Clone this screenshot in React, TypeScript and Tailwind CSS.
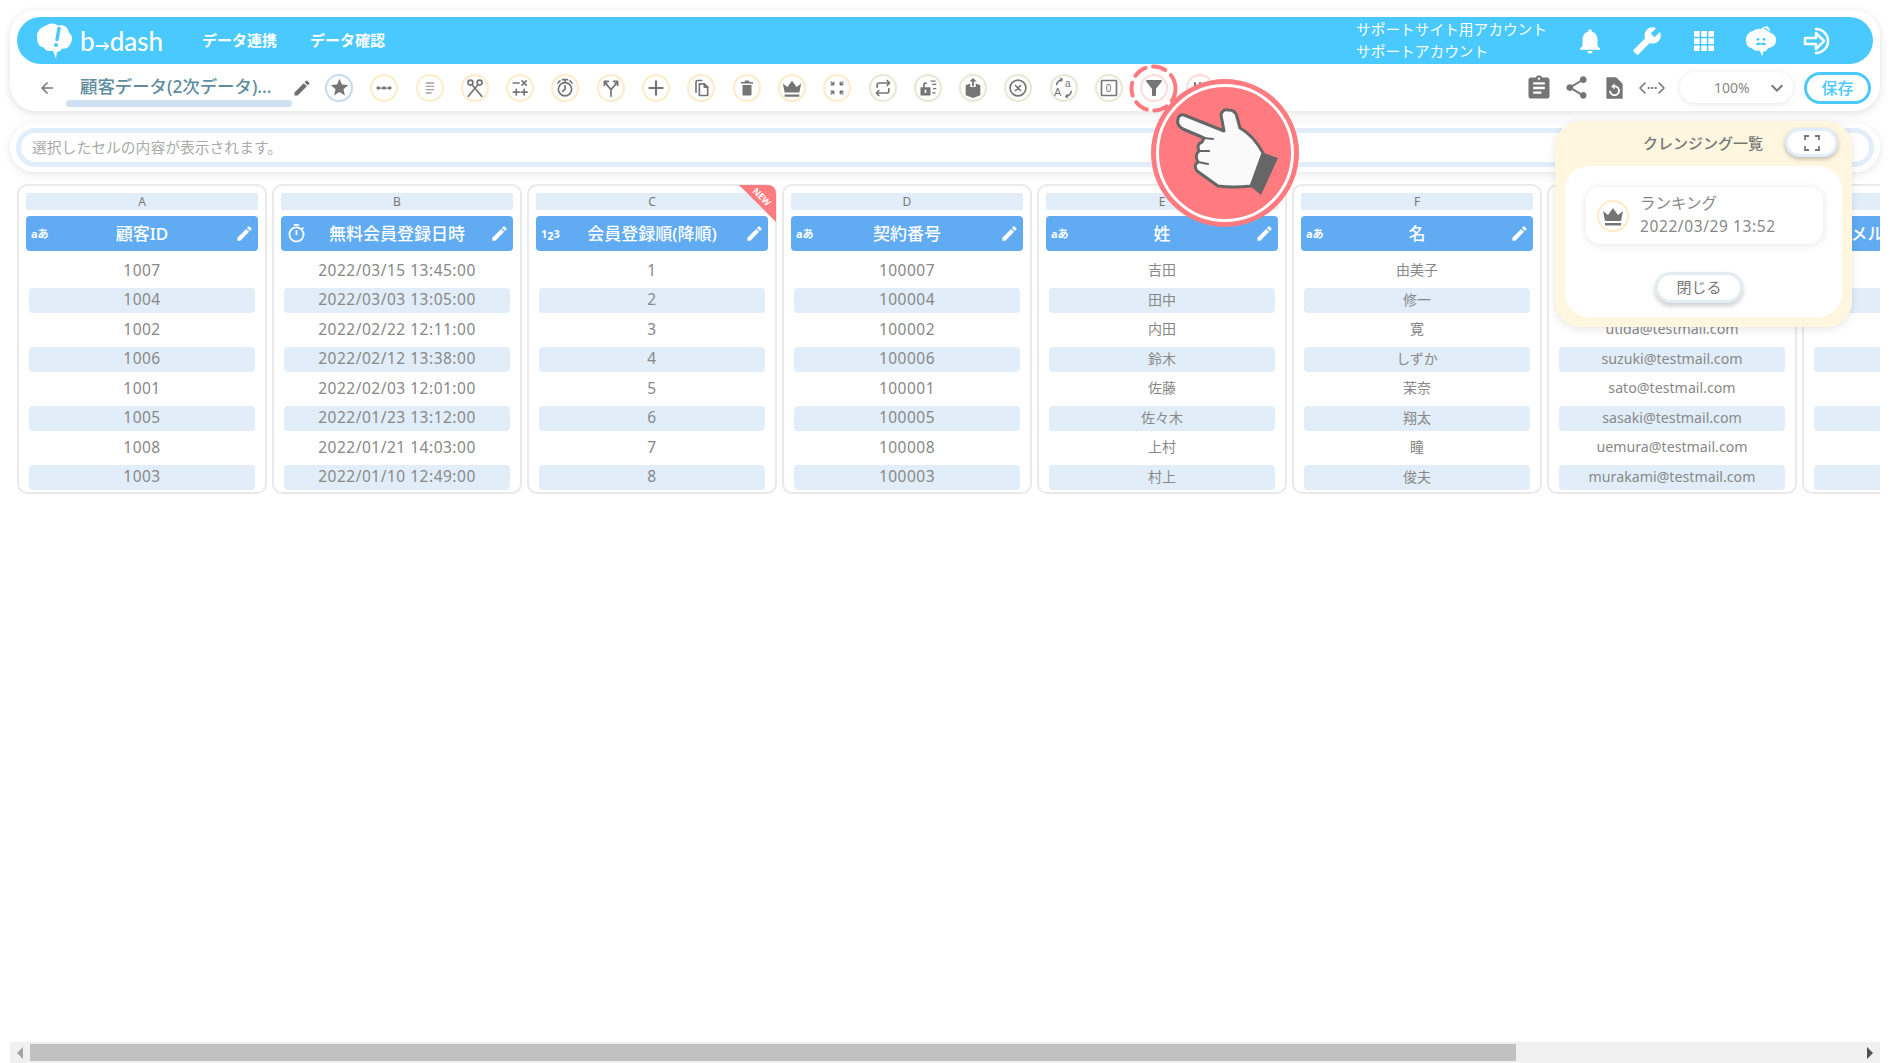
import { ReactNode } from "react";
import { MdArrowBack, MdEdit, MdNotifications, MdBuild, MdAssignment, MdShare, MdStar, MdKeyboardArrowDown, MdFilterAlt, MdOutlineTimer } from "react-icons/md";

const ic = "#757575";

function Ico({ children }: { children: ReactNode }) {
  return (
    <svg width="20" height="20" viewBox="0 0 24 24" fill="none" stroke={ic} strokeWidth="2" strokeLinecap="round" strokeLinejoin="round">
      {children}
    </svg>
  );
}

const tools: { border: string; icon: ReactNode }[] = [
  { border: "border-[#c5dcf0]", icon: <MdStar size={21} color={ic} /> },
  { border: "border-[#fcecc8]", icon: <Ico><path d="M4 12h16" strokeWidth="1.5" /><circle cx="5" cy="12" r="2" fill={ic} stroke="none" /><circle cx="12" cy="12" r="2" fill={ic} stroke="none" /><circle cx="19" cy="12" r="2" fill={ic} stroke="none" /></Ico> },
  { border: "border-[#fcecc8]", icon: <Ico><path d="M7 6h10M7 10h10M7 14h10M7 18h7" stroke="#a0a0a0" strokeWidth="1.6" strokeLinecap="butt" /></Ico> },
  { border: "border-[#fcecc8]", icon: <Ico><circle cx="6.5" cy="5.5" r="3" /><circle cx="17.5" cy="5.5" r="3" /><path d="M8.5 8 20 22M15.5 8 4 22" /></Ico> },
  { border: "border-[#fcecc8]", icon: <Ico><path d="M4 6h7M14.5 3.5l5 5M19.5 3.5l-5 5M4 17h7M7.5 13.5v7M13.5 17h7M17 13.5v7" /></Ico> },
  { border: "border-[#fcecc8]", icon: <Ico><circle cx="12" cy="13.5" r="8" /><path d="M9 2h6M12 2v3M12 13.5V9M12 13.5l-3 2.5M3.5 6 6 3.5M20.5 6 18 3.5" /></Ico> },
  { border: "border-[#fcecc8]", icon: <Ico><path d="M12 22v-8l6-7M12 14 6 7M4 9V4h5M20 9V4h-5M4 4l3 3M20 4l-3 3" /></Ico> },
  { border: "border-[#fcecc8]", icon: <Ico><path d="M12 4v16M4 12h16" strokeWidth="2.6" /></Ico> },
  { border: "border-[#fcecc8]", icon: <Ico><path d="M6 17V5a2 2 0 0 1 2-2h5" /><path d="M10 7h6l4 4v10H10z" /><path d="M16 7v4h4" /></Ico> },
  { border: "border-[#fcecc8]", icon: <svg width="18" height="18" viewBox="0 0 24 24" fill={ic}><path d="M9 2h6v2h5v2H4V4h5zM6 8h12v13a1 1 0 0 1-1 1H7a1 1 0 0 1-1-1z" /></svg> },
  { border: "border-[#fcecc8]", icon: <svg width="22" height="22" viewBox="0 0 24 24" fill={ic}><path d="M2 7l5 4 5-7 5 7 5-4-2 10H4zM4 19h16v2.500H4z" /></svg> },
  { border: "border-[#fcecc8]", icon: <Ico><path d="M5 5l3 3M8 5v3H5M19 5l-3 3M16 5v3h3M5 19l3-3M8 19v-3H5M19 19l-3-3M16 19v-3h3" strokeWidth="1.8" /></Ico> },
  { border: "border-[#e4ead4]", icon: <Ico><path d="M5 11V8a2 2 0 0 1 2-2h13M17 3l3 3-3 3M19 13v3a2 2 0 0 1-2 2H4M7 15l-3 3 3 3" /></Ico> },
  { border: "border-[#e4ead4]", icon: <svg width="20" height="20" viewBox="0 0 24 24" fill={ic}><path d="M3 11h12v10H3zM6 11V8a3 3 0 0 1 5-2l-1 1.500A1.500 1.500 0 0 0 8 8v3z" /><rect x="8" y="14" width="2" height="4" fill="#fff" /><path d="M15 3h6v1.500h-6zM17 7h5v1.500h-5zM18 12h4v1.500h-4zM17 17h4v1.500h-4z" /></svg> },
  { border: "border-[#e4ead4]", icon: <svg width="22" height="22" viewBox="0 0 24 24" fill={ic}><path d="M12 1l4 4h-3v5h-2V5H8zM4 9l5-2v4h6V7l5 2v11l-8 3-8-3z" /></svg> },
  { border: "border-[#e4ead4]", icon: <Ico><circle cx="12" cy="12" r="9.500" /><path d="M9 9l6 6M15 9l-6 6" /></Ico> },
  { border: "border-[#e4ead4]", icon: <svg width="22" height="22" viewBox="0 0 24 24" fill="none" stroke={ic} strokeWidth="1.600"><path d="M4 9a6 6 0 0 1 6-6M8 1l2 2-2 2M20 15a6 6 0 0 1-6 6M16 23l-2-2 2-2" /><text x="13" y="11" fontSize="11" fill={ic} stroke="none" fontFamily="Liberation Sans">a</text><text x="1" y="21" fontSize="12" fill={ic} stroke="none" fontFamily="Liberation Sans">A</text></svg> },
  { border: "border-[#e4ead4]", icon: <svg width="20" height="20" viewBox="0 0 24 24" fill="none" stroke={ic} strokeWidth="2"><rect x="3" y="3" width="18" height="18" rx="1" /><text x="8" y="17" fontSize="12" fill={ic} stroke="none" fontFamily="Liberation Sans">0</text></svg> },
  { border: "border-[#fcdcdc]", icon: <MdFilterAlt size={24} color={ic} /> },
  { border: "border-[#fcdcdc]", icon: <Ico><path d="M6 6v4M12 6v4M18 6v4" strokeWidth="2.500" /></Ico> },
];

type Col = { letter: string; title: string; type: "text" | "time" | "num"; size: string; rows: string[]; isNew?: boolean };

const digits = "text-[15.500px] tracking-[0.5px]";
const kana = "text-[14px] pb-[2px]";

const cols: Col[] = [
  { letter: "A", title: "顧客ID", type: "text", size: digits, rows: ["1007", "1004", "1002", "1006", "1001", "1005", "1008", "1003"] },
  { letter: "B", title: "無料会員登録日時", type: "time", size: digits, rows: ["2022/03/15 13:45:00", "2022/03/03 13:05:00", "2022/02/22 12:11:00", "2022/02/12 13:38:00", "2022/02/03 12:01:00", "2022/01/23 13:12:00", "2022/01/21 14:03:00", "2022/01/10 12:49:00"] },
  { letter: "C", title: "会員登録順(降順)", type: "num", size: digits, isNew: true, rows: ["1", "2", "3", "4", "5", "6", "7", "8"] },
  { letter: "D", title: "契約番号", type: "text", size: digits, rows: ["100007", "100004", "100002", "100006", "100001", "100005", "100008", "100003"] },
  { letter: "E", title: "姓", type: "text", size: kana, rows: ["吉田", "田中", "内田", "鈴木", "佐藤", "佐々木", "上村", "村上"] },
  { letter: "F", title: "名", type: "text", size: kana, rows: ["由美子", "修一", "寛", "しずか", "茉奈", "翔太", "瞳", "俊夫"] },
  { letter: "G", title: "メールアドレス", type: "text", size: "text-[14.200px] pb-[1px]", rows: ["", "", "utida@testmail.com", "suzuki@testmail.com", "sato@testmail.com", "sasaki@testmail.com", "uemura@testmail.com", "murakami@testmail.com"] },
  { letter: "H", title: "メルマガ購読フラグ", type: "text", size: digits, rows: ["", "", "", "", "", "", "", ""] },
];

function Cloud({ size }: { size: number }) {
  return (
    <svg width={size} height={size} viewBox="0 0 37 36">
      <path d="M10 3Q16-1 22 3 31 1 33 10 38 14 35 20 33 27 26 26 24 30 21 29L20 36 17 28Q10 30 8 25 1 24 1 15 0 7 10 3Z" fill="#fff" />
      <path d="M23 6 21 17" stroke="#4ac9ff" strokeWidth="3.500" strokeLinecap="round" />
      <circle cx="20" cy="22.500" r="2" fill="#4ac9ff" />
    </svg>
  );
}

function Column({ col }: { col: Col }) {
  return (
    <div className="relative w-[250px] h-[310px] shrink-0 border-2 border-[#e9e9e9] rounded-[10px] pl-[7px] pr-[7px] pt-[7px] bg-white">
      {col.isNew && (
        <div className="absolute -top-[1px] -right-[1px] w-[37px] h-[37px] bg-[#ff7b80] rounded-tr-[8px] [clip-path:polygon(0_0,100%_0,100%_100%)]">
          <span className="absolute top-[6px] left-[12px] rotate-45 text-[9px] leading-[12px] font-bold text-white">NEW</span>
        </div>
      )}
      <div className="h-[17px] bg-[#e1eefa] rounded-[2px] flex items-center justify-center text-[12px] text-[#777]">{col.letter}</div>
      <div className="mt-[6px] h-[35px] bg-[#60abf2] rounded-[4px] grid grid-cols-[36px_1fr_36px] items-center text-white">
        <div className="pl-[5px] flex items-center">
          {col.type === "text" && <span className="text-[11px] font-bold leading-none">aあ</span>}
          {col.type === "num" && (
            <span className="text-[11px] font-bold leading-none">1<span className="relative top-[2px]">2</span>3</span>
          )}
          {col.type === "time" && <MdOutlineTimer size={21} color="#fff" />}
        </div>
        <div className="text-center text-[17px] font-medium whitespace-nowrap">{col.title}</div>
        <div className="flex justify-end pr-[4px]"><MdEdit size={19} color="#fff" /></div>
      </div>
      <div className="mt-[7px] flex flex-col gap-[4.5px]">
        {col.rows.map((r, i) => (
          <div key={i} className={`mx-[3px] h-[25px] rounded-[4px] flex items-center justify-center text-[#888] ${col.size} ${i % 2 === 1 ? "bg-[#e1eefa]" : ""}`}>
            {r}
          </div>
        ))}
      </div>
    </div>
  );
}

export default function App() {
  return (
    <div className="relative w-[1890px] h-[1063px] flex flex-col overflow-hidden bg-white font-['Noto_Sans','Noto_Sans_CJK_JP',sans-serif]">
      {/* header card */}
      <div className="mt-[10px] mx-[10px] h-[101px] rounded-[26px] bg-white shadow-[0_2px_8px_rgba(0,0,0,0.12)] shrink-0 px-[7px] pt-[7px]">
        <div className="h-[47px] rounded-full bg-[#4ac9ff] flex items-center pl-[19px] pr-[40px] text-white">
          <Cloud size={37} />
          <span className="ml-[7px] w-[82px] text-[26px] leading-none font-medium font-['Lato',sans-serif] whitespace-nowrap">b<span className="text-[15px] font-bold">→</span>dash</span>
          <span className="ml-[40px] text-[15px] font-bold">データ連携</span>
          <span className="ml-[33px] text-[15px] font-bold">データ確認</span>
          <div className="ml-auto w-[191px] -mt-[1px] text-[14.700px] leading-[22px] whitespace-nowrap">
            <div>サポートサイト用アカウント</div>
            <div>サポートアカウント</div>
          </div>
          <div className="ml-[28px] flex items-center gap-[27px]">
            <MdNotifications size={30} color="#fff" />
            <MdBuild size={30} color="#fff" className="-scale-x-100" />
            <svg width="30" height="30" viewBox="0 0 24 24" fill="#fff">
              <path d="M4 4h4.500v4.500H4zM9.800 4h4.500v4.500H9.800zM15.500 4H20v4.500h-4.500zM4 9.800h4.500v4.500H4zM9.800 9.800h4.500v4.500H9.800zM15.500 9.800H20v4.500h-4.500zM4 15.500h4.500V20H4zM9.800 15.500h4.500V20H9.800zM15.500 15.500H20V20h-4.500z" />
            </svg>
            <svg width="32" height="32" viewBox="0 0 37 36" className="-mx-[1px]">
              <path d="M10 6Q14 3 19 4 21 1 26 1L29 5 28 8Q36 10 36 18 35 25 27 26 24 31 21 30L20 36 17 29Q10 30 8 26 1 25 1 17 1 9 10 6Z" fill="#fff" />
              <path d="M22 3Q26 5 28 7" stroke="#4ac9ff" strokeWidth="1.200" fill="none" />
              <circle cx="15" cy="16" r="1.600" fill="#4ac9ff" />
              <circle cx="22" cy="16" r="1.600" fill="#4ac9ff" />
              <path d="M12 22Q16 18 18.500 21 21 18 25 22 21 23.500 18.500 22 16 23.500 12 22Z" fill="#4ac9ff" />
            </svg>
            <svg width="30" height="30" viewBox="0 0 30 30" fill="none" stroke="#fff" strokeWidth="2.500" strokeLinejoin="round" strokeLinecap="round">
              <path d="M2 12h11V7l8 8-8 8v-5H2z" />
              <path d="M13 3a12 12 0 1 1 0 24" />
            </svg>
          </div>
        </div>
        <div className="h-[47px] flex items-center">
          <MdArrowBack size={18} color="#777" className="ml-[21px]" />
          <div className="ml-[10px] w-[226px] h-[38px] relative shrink-0">
            <span className="absolute left-[14px] top-[6px] text-[17.400px] leading-[22px] font-medium text-[#5e8c9c] whitespace-nowrap">顧客データ(2次データ)...</span>
            <div className="absolute left-0 right-0 bottom-0 h-[7px] rounded-full bg-[#cfe0f0]" />
          </div>
          <MdEdit size={20} color="#6e6e6e" />
          <div className="ml-[13px] flex items-center gap-[17.300px]">
            {tools.map((t, i) => (
              <div key={i} className={`w-[28px] h-[28px] rounded-full border-2 ${t.border} bg-white flex items-center justify-center shrink-0`}>
                {t.icon}
              </div>
            ))}
          </div>
          <div className="ml-auto flex items-center">
            <MdAssignment size={28} color={ic} />
            <MdShare size={27} color={ic} className="ml-[10px]" />
            <svg width="26" height="26" viewBox="0 0 24 24" fill={ic} className="ml-[11px]">
              <path d="M5 2h9l6 6v14H5zM12.500 9.500a5 5 0 1 1-5 5h1.800a3.200 3.200 0 1 0 3.200-3.200v2L9.500 10.500l3-3z" fillRule="evenodd" />
            </svg>
            <svg width="28" height="20" viewBox="0 0 28 20" fill="none" stroke={ic} strokeWidth="1.600" className="ml-[11px]" strokeLinecap="round" strokeLinejoin="round">
              <path d="M7 5 2 10l5 5M21 5l5 5-5 5" />
              <path d="M10.500 10h.5M14 10h.5M17.500 10h.5" strokeWidth="2" />
            </svg>
            <div className="ml-[14px] w-[113px] h-[31px] rounded-full bg-white shadow-[0_1px_6px_rgba(0,0,0,0.1)] flex items-center text-[14px] text-[#888]">
              <span className="ml-[34px]">100%</span>
              <MdKeyboardArrowDown size={24} color="#777" className="ml-auto mr-[4px]" />
            </div>
            <button className="ml-[11px] mr-[2px] w-[67px] h-[32px] rounded-full border-[3px] border-[#4ac9ff] text-[16px] font-medium text-[#4ac9ff] bg-white flex items-center justify-center">保存</button>
          </div>
        </div>
      </div>

      {/* formula bar */}
      <div className="mt-[12px] mx-[10px] h-[49px] shrink-0 rounded-[25px] bg-white shadow-[0_2px_8px_rgba(0,0,0,0.1)] px-[6px] py-[5px]">
        <div className="h-[39px] rounded-full border-[5px] border-[#e1eefa] bg-white flex items-center pl-[11px] text-[14.800px] text-[#aaa]">
          選択したセルの内容が表示されます。
        </div>
      </div>

      {/* columns */}
      <div className="mt-[12px] ml-[17px] mr-[10px] flex gap-[5px] overflow-hidden shrink-0">
        {cols.map((c) => (
          <Column key={c.letter} col={c} />
        ))}
      </div>

      {/* scrollbar */}
      <div className="mt-auto mx-[10px] h-[21px] bg-[#f0f0f0] flex items-center shrink-0">
        <svg width="8" height="12" viewBox="0 0 8 12" className="ml-[6px]"><path d="M7 0v12L1 6z" fill="#a3a3a3" /></svg>
        <div className="ml-[6px] w-[1486px] h-[17px] bg-[#c1c1c1]" />
        <svg width="8" height="12" viewBox="0 0 8 12" className="ml-auto mr-[6px]"><path d="M1 0v12l6-6z" fill="#505050" /></svg>
      </div>

      {/* cleansing list popup */}
      <div className="absolute left-[1555px] top-[121px] w-[297px] h-[206px] rounded-[26px] bg-[#fff6e0] shadow-[0_2px_8px_rgba(0,0,0,0.1)] pl-[10px] pr-[10px] pb-[10px] flex flex-col">
        <div className="h-[45px] shrink-0 flex items-center">
          <div className="flex-1 pl-[56px] text-center text-[15px] font-medium text-[#777] whitespace-nowrap">クレンジング一覧</div>
          <div className="w-[53px] h-[29px] mt-[-2px] mr-[4px] rounded-full bg-white border-[3px] border-[#e1eefa] shadow-[0_2px_4px_rgba(0,0,0,0.25)] flex items-center justify-center">
            <svg width="16" height="16" viewBox="0 0 16 16" fill="none" stroke="#777" strokeWidth="1.800"><path d="M1 5V1h4M11 1h4v4M15 11v4h-4M5 15H1v-4" /></svg>
          </div>
        </div>
        <div className="flex-1 rounded-[24px] bg-white pl-[21px] pr-[19px] pt-[21px] flex flex-col items-stretch">
          <div className="h-[57px] rounded-[14px] bg-white shadow-[0_1px_8px_rgba(0,0,0,0.1)] flex items-center pl-[11px]">
            <div className="w-[32px] h-[32px] rounded-full border-2 border-[#fcecc8] flex items-center justify-center">
              <svg width="24" height="24" viewBox="0 0 24 24" fill={ic}><path d="M2 7l5 4 5-7 5 7 5-4-2 10H4zM4 19h16v2.500H4z" /></svg>
            </div>
            <div className="ml-[11px] -mt-[1px] text-[#888]">
              <div className="text-[15.500px] leading-[22px]">ランキング</div>
              <div className="text-[15.500px] leading-[24px] tracking-[0.6px]">2022/03/29 13:52</div>
            </div>
          </div>
          <button className="mt-[28px] ml-[69px] self-start w-[88px] h-[31px] rounded-full border-[3px] border-[#e3edf0] bg-white shadow-[0_3px_5px_rgba(0,0,0,0.2)] text-[15px] text-[#777] flex items-center justify-center">閉じる</button>
        </div>
      </div>

      {/* highlight on the filter button */}
      <svg className="absolute left-[1129px] top-[64px]" width="49" height="49" viewBox="0 0 49 49" fill="none">
        <circle cx="24.500" cy="24.500" r="22" stroke="#ff7b80" strokeWidth="4" strokeDasharray="13 7.500" strokeLinecap="round" />
      </svg>

      {/* pointing hand */}
      <div className="absolute left-[1151px] top-[79px] w-[148px] h-[148px] rounded-full bg-[#ff7b80] p-[5px]">
        <div className="w-full h-full rounded-full border-[3px] border-white" />
        <svg className="absolute left-0 top-0" width="148" height="148" viewBox="0 0 148 148">
          <path d="M113 74 127 79 110 116 99 107Z" fill="#666" />
          <path d="M33 36 73 52 70 36Q71 30 77 31 85 31 86 38L89 49Q102 56 112 74L100 107Q82 109 67 107L46 92Q42 86 47 83 43 76 48 72 45 65 51 63L53 59 32 50Q25 46 27 40 28 35 33 36Z" fill="#fafafa" stroke="#666" strokeWidth="3" strokeLinejoin="round" />
          <path d="M53 59 62 60M48 72 58 72M47 83 57 85" stroke="#666" strokeWidth="2.200" strokeLinecap="round" fill="none" />
        </svg>
      </div>
    </div>
  );
}
